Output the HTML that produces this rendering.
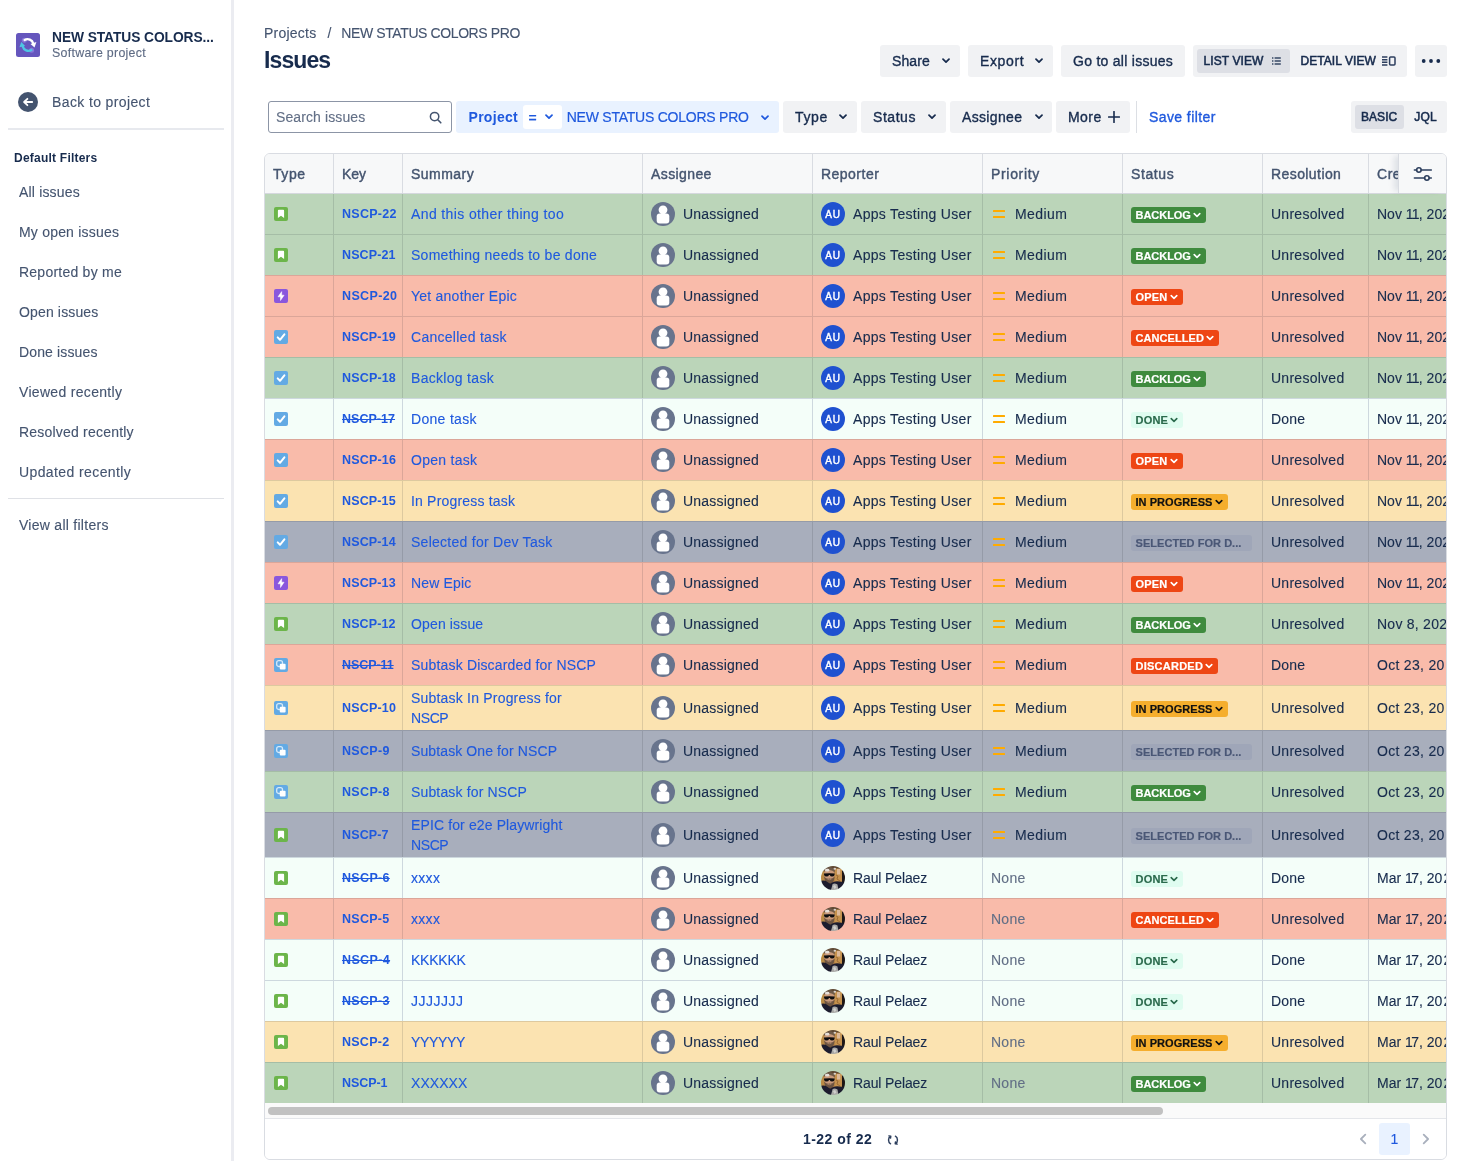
<!DOCTYPE html>
<html lang="en"><head><meta charset="utf-8"><title>Issues - NEW STATUS COLORS PRO</title>
<style>
*{box-sizing:border-box}
html,body{margin:0;padding:0}
body{-webkit-font-smoothing:antialiased;-webkit-text-stroke:.12px currentColor;width:1463px;height:1161px;position:relative;overflow:hidden;background:#fff;font-family:"Liberation Sans",sans-serif;font-size:14px;color:#172b4d}
.abs{position:absolute;white-space:nowrap}
/* sidebar */
.sbr{position:absolute;left:231px;top:0;width:3px;height:1161px;background:#ebecf1}
.pav{position:absolute;left:16px;top:33px;width:24px;height:24px}
.pname{left:52px;top:30px;font-weight:700;font-size:13.8px;line-height:16px;color:#172b4d}
.ptype{left:52px;top:46px;font-size:12.4px;line-height:14px;color:#5e6b84}
.back{position:absolute;left:18px;top:92px;width:20px;height:20px}
.backt{left:52px;top:94px;line-height:16px;color:#44546f}
.sd1{position:absolute;left:8px;top:128px;width:216px;height:2px;background:#e7e9ee}
.dflt{left:14px;top:151px;font-size:12px;font-weight:700;line-height:14px;color:#172b4d}
.it{left:19px;line-height:16px;color:#44546f}
.sd2{position:absolute;left:8px;top:498px;width:216px;height:1px;background:#dfe1e6}
/* header */
.bc{left:264px;top:25px;line-height:16px;color:#44546f}
.ttl{left:264px;top:46px;font-size:23px;line-height:28px;font-weight:700;color:#172b4d}
.btn{position:absolute;height:32px;background:#f1f2f4;border-radius:3px;line-height:32px;white-space:nowrap;color:#172b4d;font-size:14px}
.btn .t{position:absolute;top:0}
.btn .cv{position:absolute;top:13px}
.cv{color:#172b4d}
.grp{position:absolute;height:32px;background:#f1f2f4;border-radius:3px}
.pill{position:absolute;top:4px;height:24px;background:#dddfe5;border-radius:3px}
.gt{position:absolute;top:0;line-height:32px;font-size:12px;font-weight:400;color:#172b4d;white-space:nowrap;-webkit-text-stroke:.55px currentColor}
.search{position:absolute;left:268px;top:101px;width:184px;height:32px;border:1px solid #8c95a6;border-radius:3px;background:#fff}
.search .ph{position:absolute;left:7px;top:0;line-height:30px;color:#626f86}
.proj{position:absolute;left:456px;top:101px;width:323px;height:32px;background:#e9f2ff;border-radius:3px;color:#1f59de}
.proj .eq{position:absolute;left:67px;top:4px;width:39px;height:24px;background:#fff;border-radius:3px}
.vdiv{position:absolute;left:1136px;top:101px;width:1px;height:32px;background:#dcdfe4}
.save{left:1149px;top:109px;line-height:16px;color:#1f59de}
/* table */
.tbl{position:absolute;left:264px;top:153px;width:1183px;height:1007px;border:1px solid #d9dce2;border-radius:6px;overflow:hidden;background:#fff}
.hd{position:absolute;left:0;top:0;width:1181px;height:40px;background:#f7f8f9;border-bottom:1px solid #d5d8de;z-index:2}
.h{position:absolute;top:0;height:39px;line-height:40px;padding-left:8px;border-left:1px solid #d9dce2;font-weight:400;font-size:14px;color:#44546f;white-space:nowrap;overflow:hidden}
.hd .c1{border-left:none}
.c1{left:0;width:68px}
.c2{left:68px;width:69px}
.c3{left:137px;width:240px}
.c4{left:377px;width:170px}
.c5{left:547px;width:170px}
.c6{left:717px;width:140px}
.c7{left:857px;width:140px}
.c8{left:997px;width:106px}
.c9{left:1103px;width:78px}
.cfg{position:absolute;left:1133px;top:0;width:48px;height:39px;background:#f7f8f9;border-left:1px solid #d9dce2;box-shadow:-6px 0 6px -2px rgba(9,30,66,.10)}
.cfg svg{position:absolute;left:14px;top:12px}
.body{position:absolute;left:0;top:39px;width:1181px}
.r{position:relative;height:41px;width:1181px}
.r.tall{height:45px}
.r .c{position:absolute;top:0;height:100%;border-left:1px solid rgba(20,30,40,.13);border-top:1px solid rgba(20,30,40,.13);white-space:nowrap;overflow:hidden}
.r .c1{border-left:none}
.kg{background:#bbd5b9}
.kr{background:#f9bbaa}
.ky{background:#fbe3b1}
.ks{background:#a8aebc}
.kd{background:#f4fef9}
.kd .c{border-color:rgba(49,64,114,.2)}
.ti{position:absolute;left:9px;top:50%;margin-top:-7px}
.key{position:absolute;left:8px;top:50%;margin-top:-8.5px;line-height:16px;font-size:12.5px;font-weight:700;color:#1f59de}
.key.st{text-decoration:line-through}
.sm{position:absolute;left:8px;top:50%;transform:translateY(-50%);margin-top:0;line-height:20px;color:#1f59de}
.av{position:absolute;left:8px;top:50%;margin-top:-12px;width:24px;height:24px}
.au{border-radius:50%;background:#1f51d0;color:#fff;font-size:10px;font-weight:400;text-align:center;line-height:26px;-webkit-text-stroke:.4px #fff}
.nm{position:absolute;left:40px;top:50%;margin-top:-8px;line-height:16px;color:#172b4d}
.pi{position:absolute;left:10px;top:50%;margin-top:-4px;width:12px;height:8px}
.pi i{display:block;width:12px;height:2px;background:#ffab00;margin-bottom:4px;border-radius:.5px}
.pt{position:absolute;left:32px;top:50%;margin-top:-8px;line-height:16px;color:#172b4d}
.none{position:absolute;left:8px;top:50%;margin-top:-8px;line-height:16px;color:#626f86}
.bd{position:absolute;left:8px;top:50%;margin-top:-7px;height:16px;border-radius:3px;font-size:11px;font-weight:700;line-height:16px;white-space:nowrap;overflow:hidden}
.bt{position:absolute;left:4.5px;top:0;-webkit-text-stroke:.2px currentColor}
.bcv{position:absolute;right:5px;top:5px}
.sel{padding-left:4.5px}
.tx{position:absolute;left:8px;top:50%;margin-top:-8px;line-height:16px;color:#172b4d}
.sb{position:absolute;left:0;top:949px;width:1181px;height:16px;background:#fafafa;border-bottom:1px solid #e4e6ea}
.thumb{position:absolute;left:3px;top:4px;width:895px;height:8px;border-radius:4px;background:#c1c1c1}
.ft{position:absolute;left:0;top:965px;width:1181px;height:40px;background:#fff}
.cnt{position:absolute;left:538px;top:12px;line-height:16px;font-weight:700;font-size:14px;color:#172b4d}
.rf{position:absolute;left:621.5px;top:14.5px}
.pl{position:absolute;left:1094px;top:13.7px}
.pr{position:absolute;left:1157px;top:13.7px}
.pg{position:absolute;left:1114px;top:4px;width:31px;height:32px;border-radius:3px;background:#e9f2ff;color:#1f59de;text-align:center;line-height:32px;font-size:14px}

.m{-webkit-text-stroke:.35px currentColor}
.sl{margin:0 10px 0 11px}
.h span{-webkit-text-stroke:.4px currentColor}

.app{position:absolute;left:0;top:0;width:1463px;height:1161px;will-change:transform;background:#fff}
.m2{-webkit-text-stroke:.2px currentColor}
.pname,.dflt,.ttl,.key,.cnt,.b0{-webkit-text-stroke:0}

</style></head>
<body>
<div class="app">
<svg width="0" height="0" style="position:absolute"><defs><clipPath id="rpc"><circle cx="12" cy="12" r="12"/></clipPath><filter id="rpb" x="-10%" y="-10%" width="120%" height="120%"><feGaussianBlur stdDeviation="0.55"/></filter>
<symbol id="rp" viewBox="0 0 24 24"><g clip-path="url(#rpc)"><g filter="url(#rpb)"><rect x="-2" y="-2" width="28" height="28" fill="#a9773f"/>
<rect x="-2" y="-2" width="28" height="7" fill="#5d4632"/>
<rect x="13.5" y="2.5" width="8" height="15" fill="#c4914d"/><rect x="16" y="3" width="3.2" height="5.5" fill="#dcb99a"/><path d="M15 9 l2 1 l-1 3 l3 2" stroke="#9b6a35" stroke-width="1" fill="none"/>
<rect x="21" y="-2" width="5" height="28" fill="#1d1915"/>
<rect x="-2" y="5" width="6" height="10" fill="#b98a45"/>
<ellipse cx="8.3" cy="8.5" rx="5.2" ry="6.2" fill="#c99a7c"/>
<path d="M2.5 6 Q4 1.5 9 1.2 Q13.5 1.5 14 6.5 Q11 3.6 8 4 Q5 4.2 2.5 6Z" fill="#6e5a49"/>
<ellipse cx="6.2" cy="4.2" rx="2.3" ry="1.4" fill="#e6e0da"/><ellipse cx="13.8" cy="2.8" rx="1.3" ry="1" fill="#d8d2cc"/>
<path d="M3 10.5 Q4 17.5 8.5 18 Q13 17.5 13.6 10.8 Q11 13.2 8.4 12.6 Q5.5 13.2 3 10.5Z" fill="#6d5442"/>
<path d="M6.4 13.3 Q8.4 14.2 10.4 13.3" stroke="#b08a72" stroke-width=".7" fill="none"/>
<path d="M-2 15.5 Q3 13.5 6.5 16 Q9 18.5 11 16.5 L14 15.5 Q19 14.8 26 17.5 V26 H-2Z" fill="#1b1c2f"/>
<path d="M9.5 26 L11.5 18.2 Q13.5 16.6 16.5 18.6 L17.8 26Z" fill="#a9a8a6"/><path d="M12 20 l2 -1 l1.5 2.5 l-2 1.5z" fill="#d0cfcd"/>
</g><path d="M3 7.6 Q8.3 6.8 13.7 7.6 L13.5 9 Q13 10.6 11 10.6 Q9.2 10.5 8.8 8.9 L8 8.9 Q7.5 10.5 5.6 10.6 Q3.5 10.5 3.1 9Z" fill="#0d0d0f"/></g></symbol></defs></svg>

<div class="sbr"></div>
<svg class="pav" viewBox="0 0 24 24"><rect width="24" height="24" rx="2.5" fill="#6556bd"/><circle cx="8.3" cy="7.2" r="2.5" fill="#8f7fe0" opacity=".8"/><circle cx="15.6" cy="17.3" r="2.5" fill="#8f7fe0" opacity=".8"/><path d="M8.6 7 A5.9 5.9 0 0 1 17.3 10.6" fill="none" stroke="#fff" stroke-width="2.3" stroke-linecap="round"/><path d="M14.5 10.9 L20.4 9.1 L18.5 14.6 Z" fill="#fff"/><path d="M15.4 17 A5.9 5.9 0 0 1 6.7 13.4" fill="none" stroke="#4fc6e4" stroke-width="2.3" stroke-linecap="round"/><path d="M9.2 12.9 L3.4 14.3 L5.3 8.9 Z" fill="#4fc6e4"/></svg>
<div class="abs pname"><span style="letter-spacing:-0.085px;">NEW STATUS COLORS...</span></div>
<div class="abs ptype"><span style="letter-spacing:0.278px;">Software project</span></div>
<svg class="back" viewBox="0 0 20 20"><circle cx="10" cy="10" r="10" fill="#44546f"/><path d="M14.2 10 H6.4 M9.4 6.8 L6.1 10 L9.4 13.2" fill="none" stroke="#fff" stroke-width="1.8" stroke-linecap="round" stroke-linejoin="round"/></svg>
<div class="abs backt"><span style="letter-spacing:0.378px;">Back to project</span></div>
<div class="sd1"></div>
<div class="abs dflt"><span style="letter-spacing:0.227px;">Default Filters</span></div>
<div class="abs it" style="top:184px"><span style="letter-spacing:0.173px;">All issues</span></div>
<div class="abs it" style="top:224px"><span style="letter-spacing:0.201px;">My open issues</span></div>
<div class="abs it" style="top:264px"><span style="letter-spacing:0.238px;">Reported by me</span></div>
<div class="abs it" style="top:304px"><span style="letter-spacing:0.147px;">Open issues</span></div>
<div class="abs it" style="top:344px"><span style="letter-spacing:0.135px;">Done issues</span></div>
<div class="abs it" style="top:384px"><span style="letter-spacing:0.316px;">Viewed recently</span></div>
<div class="abs it" style="top:424px"><span style="letter-spacing:0.207px;">Resolved recently</span></div>
<div class="abs it" style="top:464px"><span style="letter-spacing:0.397px;">Updated recently</span></div>
<div class="sd2"></div>
<div class="abs it" style="top:517px"><span style="letter-spacing:0.271px;">View all filters</span></div>

<div class="abs bc"><span style="letter-spacing:0.232px;">Projects</span><span class="sl">/</span><span style="letter-spacing:-0.398px;">NEW STATUS COLORS PRO</span></div>
<div class="abs ttl"><span style="letter-spacing:-0.9px;">Issues</span></div>

<div class="btn" style="left:880px;top:45px;width:80px"><span class="t m" style="letter-spacing:0.11px;left:12px">Share</span><svg class="cv" style="left:62px" viewBox="0 0 8 6" width="8" height="6"><path d="M1 1.2 L4 4.2 L7 1.2" fill="none" stroke="currentColor" stroke-width="1.7" stroke-linecap="round" stroke-linejoin="round"/></svg></div>
<div class="btn" style="left:968px;top:45px;width:85px"><span class="t m" style="letter-spacing:0.626px;left:12px">Export</span><svg class="cv" style="left:67px" viewBox="0 0 8 6" width="8" height="6"><path d="M1 1.2 L4 4.2 L7 1.2" fill="none" stroke="currentColor" stroke-width="1.7" stroke-linecap="round" stroke-linejoin="round"/></svg></div>
<div class="btn" style="left:1061px;top:45px;width:124px"><span class="t m" style="letter-spacing:0.272px;left:12px">Go to all issues</span></div>
<div class="grp" style="left:1193px;top:45px;width:214px"><div class="pill" style="left:4px;width:93px"></div><span class="gt" style="letter-spacing:0.095px;left:10.5px">LIST VIEW</span><svg style="position:absolute;left:79px;top:12px" viewBox="0 0 9 8" width="9" height="8"><g fill="#2c3e5d"><rect x="0" y="0.3" width="1.4" height="1.4"/><rect x="2.6" y="0.3" width="6.2" height="1.4"/><rect x="0" y="3.3" width="1.4" height="1.4"/><rect x="2.6" y="3.3" width="6.2" height="1.4"/><rect x="0" y="6.3" width="1.4" height="1.4"/><rect x="2.6" y="6.3" width="6.2" height="1.4"/></g></svg><span class="gt" style="letter-spacing:0.081px;left:107.4px">DETAIL VIEW</span><svg style="position:absolute;left:189px;top:11px" viewBox="0 0 14 10" width="14" height="10"><g fill="none" stroke="#2c3e5d" stroke-width="1.5"><path d="M0 1 H5.4 M0 3.7 H5.4 M0 6.3 H5.4 M0 9 H5.4"/><rect x="7.6" y="0.9" width="5.4" height="8.2" rx="1"/></g></svg></div>
<div class="btn" style="left:1415px;top:45px;width:32px"><svg style="position:absolute;left:6px;top:14px" viewBox="0 0 20 4" width="20" height="4"><circle cx="2.7" cy="2" r="1.9" fill="#172b4d"/><circle cx="10" cy="2" r="1.9" fill="#172b4d"/><circle cx="17.3" cy="2" r="1.9" fill="#172b4d"/></svg></div>

<div class="search"><span class="ph" style="letter-spacing:0.105px;">Search issues</span><svg style="position:absolute;left:160px;top:9px" viewBox="0 0 13 13" width="13" height="13"><circle cx="5.6" cy="5.6" r="4.2" fill="none" stroke="#44546f" stroke-width="1.5"/><path d="M8.8 8.8 L11.8 11.8" stroke="#44546f" stroke-width="1.6" stroke-linecap="round"/></svg></div>
<div class="proj"><span class="abs b0" style="letter-spacing:0.289px;left:12.5px;top:0;line-height:32px;font-weight:700">Project</span><div class="eq"><span class="abs m" style="left:5.5px;top:1px;line-height:24px;font-size:14px">=</span><svg class="abs" style="left:22px;top:9px;color:#1f59de" viewBox="0 0 8 6" width="8" height="6"><path d="M1 1.2 L4 4.2 L7 1.2" fill="none" stroke="currentColor" stroke-width="1.7" stroke-linecap="round" stroke-linejoin="round"/></svg></div><span class="abs m2" style="letter-spacing:-0.233px;left:110.7px;top:0;line-height:32px">NEW STATUS COLORS PRO</span><svg class="abs" style="left:305px;top:13.5px;color:#1f59de" viewBox="0 0 8 6" width="8" height="6"><path d="M1 1.2 L4 4.2 L7 1.2" fill="none" stroke="currentColor" stroke-width="1.7" stroke-linecap="round" stroke-linejoin="round"/></svg></div>
<div class="btn" style="left:783px;top:101px;width:74px"><span class="t m" style="letter-spacing:0.647px;left:12px">Type</span><svg class="cv" style="left:56px" viewBox="0 0 8 6" width="8" height="6"><path d="M1 1.2 L4 4.2 L7 1.2" fill="none" stroke="currentColor" stroke-width="1.7" stroke-linecap="round" stroke-linejoin="round"/></svg></div>
<div class="btn" style="left:861px;top:101px;width:85px"><span class="t m" style="letter-spacing:0.539px;left:12px">Status</span><svg class="cv" style="left:67px" viewBox="0 0 8 6" width="8" height="6"><path d="M1 1.2 L4 4.2 L7 1.2" fill="none" stroke="currentColor" stroke-width="1.7" stroke-linecap="round" stroke-linejoin="round"/></svg></div>
<div class="btn" style="left:950px;top:101px;width:102px"><span class="t m" style="letter-spacing:0.344px;left:12px">Assignee</span><svg class="cv" style="left:84.5px" viewBox="0 0 8 6" width="8" height="6"><path d="M1 1.2 L4 4.2 L7 1.2" fill="none" stroke="currentColor" stroke-width="1.7" stroke-linecap="round" stroke-linejoin="round"/></svg></div>
<div class="btn" style="left:1056px;top:101px;width:74px"><span class="t m" style="letter-spacing:0.431px;left:12px">More</span><svg style="position:absolute;left:52px;top:10px" viewBox="0 0 12 12" width="12" height="12"><path d="M6 0.6 V11.4 M0.6 6 H11.4" stroke="#172b4d" stroke-width="1.6" stroke-linecap="round"/></svg></div>
<div class="vdiv"></div>
<div class="abs save"><span class="m" style="letter-spacing:0.415px;">Save filter</span></div>
<div class="grp" style="left:1351px;top:101px;width:96px"><div class="pill" style="left:4px;width:49px"></div><span class="gt" style="letter-spacing:0.046px;left:10px">BASIC</span><span class="gt" style="letter-spacing:0.242px;left:63.2px">JQL</span></div>

<div class="tbl">
<div class="hd">
<div class="h c1"><span style="letter-spacing:0.58px;">Type</span></div><div class="h c2"><span style="letter-spacing:-0.013px;">Key</span></div><div class="h c3"><span style="letter-spacing:0.466px;">Summary</span></div><div class="h c4"><span style="letter-spacing:0.401px;">Assignee</span></div><div class="h c5"><span style="letter-spacing:0.476px;">Reporter</span></div><div class="h c6"><span style="letter-spacing:0.677px;">Priority</span></div><div class="h c7"><span style="letter-spacing:0.599px;">Status</span></div><div class="h c8"><span style="letter-spacing:0.416px;">Resolution</span></div><div class="h c9"><span style="letter-spacing:0.515px;">Created</span></div>
<div class="cfg"><svg viewBox="0 0 20 16" width="20" height="16"><g fill="none" stroke="#2c3e5d" stroke-width="1.6" stroke-linecap="round"><path d="M1.4 4 H3.5 M8.3 4 H18.3"/><circle cx="5.9" cy="4" r="2.25"/><path d="M1.4 12 H11.5 M16.3 12 H18.3"/><circle cx="13.9" cy="12" r="2.25"/></g></svg></div>
</div>
<div class="body">
<div class="r kg"><div class="c c1"><svg class="ti" viewBox="0 0 14 14" width="14" height="14"><rect width="14" height="14" rx="2" fill="#6cb54a"/><path d="M3.9 3.7 a0.9 0.9 0 0 1 .9 -.9 h4.4 a0.9 0.9 0 0 1 .9 .9 V11 L7 8.7 L3.9 11 Z" fill="#fff"/></svg></div><div class="c c2"><span class="key" style="letter-spacing:0.267px;">NSCP-22</span></div><div class="c c3"><span class="sm"><span style="letter-spacing:0.378px;">And this other thing too</span></span></div><div class="c c4"><svg class="av" viewBox="0 0 24 24" width="24" height="24"><circle cx="12" cy="12" r="12" fill="#68748d"/><circle cx="12" cy="7.8" r="4.4" fill="#fff"/><rect x="5.7" y="11.6" width="12.6" height="10" rx="3" fill="#fff"/></svg><span class="nm" style="letter-spacing:0.218px;">Unassigned</span></div><div class="c c5"><span class="av au"><span style="letter-spacing:0.9px;">AU</span></span><span class="nm" style="letter-spacing:0.309px;">Apps Testing User</span></div><div class="c c6"><span class="pi"><i></i><i></i></span><span class="pt" style="letter-spacing:0.421px;">Medium</span></div><div class="c c7"><span class="bd" style="background:#3f8b3e;color:#fff;width:75px"><span class="bt" style="letter-spacing:-0.035px;">BACKLOG</span><svg class="bcv" viewBox="0 0 8 6" width="8" height="6"><path d="M1.2 1.6 L4 4.3 L6.8 1.6" fill="none" stroke="currentColor" stroke-width="1.6" stroke-linecap="round" stroke-linejoin="round"/></svg></span></div><div class="c c8"><span class="tx" style="letter-spacing:0.264px;">Unresolved</span></div><div class="c c9"><span class="tx">Nov <span style="letter-spacing:-.75px">11</span>, 2024</span></div></div>
<div class="r kg"><div class="c c1"><svg class="ti" viewBox="0 0 14 14" width="14" height="14"><rect width="14" height="14" rx="2" fill="#6cb54a"/><path d="M3.9 3.7 a0.9 0.9 0 0 1 .9 -.9 h4.4 a0.9 0.9 0 0 1 .9 .9 V11 L7 8.7 L3.9 11 Z" fill="#fff"/></svg></div><div class="c c2"><span class="key" style="letter-spacing:0.117px;">NSCP-21</span></div><div class="c c3"><span class="sm"><span style="letter-spacing:0.271px;">Something needs to be done</span></span></div><div class="c c4"><svg class="av" viewBox="0 0 24 24" width="24" height="24"><circle cx="12" cy="12" r="12" fill="#68748d"/><circle cx="12" cy="7.8" r="4.4" fill="#fff"/><rect x="5.7" y="11.6" width="12.6" height="10" rx="3" fill="#fff"/></svg><span class="nm" style="letter-spacing:0.218px;">Unassigned</span></div><div class="c c5"><span class="av au"><span style="letter-spacing:0.9px;">AU</span></span><span class="nm" style="letter-spacing:0.309px;">Apps Testing User</span></div><div class="c c6"><span class="pi"><i></i><i></i></span><span class="pt" style="letter-spacing:0.421px;">Medium</span></div><div class="c c7"><span class="bd" style="background:#3f8b3e;color:#fff;width:75px"><span class="bt" style="letter-spacing:-0.035px;">BACKLOG</span><svg class="bcv" viewBox="0 0 8 6" width="8" height="6"><path d="M1.2 1.6 L4 4.3 L6.8 1.6" fill="none" stroke="currentColor" stroke-width="1.6" stroke-linecap="round" stroke-linejoin="round"/></svg></span></div><div class="c c8"><span class="tx" style="letter-spacing:0.264px;">Unresolved</span></div><div class="c c9"><span class="tx">Nov <span style="letter-spacing:-.75px">11</span>, 2024</span></div></div>
<div class="r kr"><div class="c c1"><svg class="ti" viewBox="0 0 14 14" width="14" height="14"><rect width="14" height="14" rx="2" fill="#8a57dd"/><path d="M7.7 2.6 V6.2 H10.1 L6.5 11.5 V7.8 H4 Z" fill="#fff" stroke="#fff" stroke-width=".5" stroke-linejoin="round"/></svg></div><div class="c c2"><span class="key" style="letter-spacing:0.351px;">NSCP-20</span></div><div class="c c3"><span class="sm"><span style="letter-spacing:0.238px;">Yet another Epic</span></span></div><div class="c c4"><svg class="av" viewBox="0 0 24 24" width="24" height="24"><circle cx="12" cy="12" r="12" fill="#68748d"/><circle cx="12" cy="7.8" r="4.4" fill="#fff"/><rect x="5.7" y="11.6" width="12.6" height="10" rx="3" fill="#fff"/></svg><span class="nm" style="letter-spacing:0.218px;">Unassigned</span></div><div class="c c5"><span class="av au"><span style="letter-spacing:0.9px;">AU</span></span><span class="nm" style="letter-spacing:0.309px;">Apps Testing User</span></div><div class="c c6"><span class="pi"><i></i><i></i></span><span class="pt" style="letter-spacing:0.421px;">Medium</span></div><div class="c c7"><span class="bd" style="background:#ee4614;color:#fff;width:52px"><span class="bt" style="letter-spacing:0.171px;">OPEN</span><svg class="bcv" viewBox="0 0 8 6" width="8" height="6"><path d="M1.2 1.6 L4 4.3 L6.8 1.6" fill="none" stroke="currentColor" stroke-width="1.6" stroke-linecap="round" stroke-linejoin="round"/></svg></span></div><div class="c c8"><span class="tx" style="letter-spacing:0.264px;">Unresolved</span></div><div class="c c9"><span class="tx">Nov <span style="letter-spacing:-.75px">11</span>, 2024</span></div></div>
<div class="r kr"><div class="c c1"><svg class="ti" viewBox="0 0 14 14" width="14" height="14"><rect width="14" height="14" rx="2" fill="#63aae4"/><path d="M3.7 7.4 L6 9.8 L10.4 4.4" fill="none" stroke="#fff" stroke-width="2" stroke-linecap="round" stroke-linejoin="round"/></svg></div><div class="c c2"><span class="key" style="letter-spacing:0.151px;">NSCP-19</span></div><div class="c c3"><span class="sm"><span style="letter-spacing:0.275px;">Cancelled task</span></span></div><div class="c c4"><svg class="av" viewBox="0 0 24 24" width="24" height="24"><circle cx="12" cy="12" r="12" fill="#68748d"/><circle cx="12" cy="7.8" r="4.4" fill="#fff"/><rect x="5.7" y="11.6" width="12.6" height="10" rx="3" fill="#fff"/></svg><span class="nm" style="letter-spacing:0.218px;">Unassigned</span></div><div class="c c5"><span class="av au"><span style="letter-spacing:0.9px;">AU</span></span><span class="nm" style="letter-spacing:0.309px;">Apps Testing User</span></div><div class="c c6"><span class="pi"><i></i><i></i></span><span class="pt" style="letter-spacing:0.421px;">Medium</span></div><div class="c c7"><span class="bd" style="background:#ee4614;color:#fff;width:88px"><span class="bt" style="letter-spacing:0.07px;">CANCELLED</span><svg class="bcv" viewBox="0 0 8 6" width="8" height="6"><path d="M1.2 1.6 L4 4.3 L6.8 1.6" fill="none" stroke="currentColor" stroke-width="1.6" stroke-linecap="round" stroke-linejoin="round"/></svg></span></div><div class="c c8"><span class="tx" style="letter-spacing:0.264px;">Unresolved</span></div><div class="c c9"><span class="tx">Nov <span style="letter-spacing:-.75px">11</span>, 2024</span></div></div>
<div class="r kg"><div class="c c1"><svg class="ti" viewBox="0 0 14 14" width="14" height="14"><rect width="14" height="14" rx="2" fill="#63aae4"/><path d="M3.7 7.4 L6 9.8 L10.4 4.4" fill="none" stroke="#fff" stroke-width="2" stroke-linecap="round" stroke-linejoin="round"/></svg></div><div class="c c2"><span class="key" style="letter-spacing:0.167px;">NSCP-18</span></div><div class="c c3"><span class="sm"><span style="letter-spacing:0.302px;">Backlog task</span></span></div><div class="c c4"><svg class="av" viewBox="0 0 24 24" width="24" height="24"><circle cx="12" cy="12" r="12" fill="#68748d"/><circle cx="12" cy="7.8" r="4.4" fill="#fff"/><rect x="5.7" y="11.6" width="12.6" height="10" rx="3" fill="#fff"/></svg><span class="nm" style="letter-spacing:0.218px;">Unassigned</span></div><div class="c c5"><span class="av au"><span style="letter-spacing:0.9px;">AU</span></span><span class="nm" style="letter-spacing:0.309px;">Apps Testing User</span></div><div class="c c6"><span class="pi"><i></i><i></i></span><span class="pt" style="letter-spacing:0.421px;">Medium</span></div><div class="c c7"><span class="bd" style="background:#3f8b3e;color:#fff;width:75px"><span class="bt" style="letter-spacing:-0.035px;">BACKLOG</span><svg class="bcv" viewBox="0 0 8 6" width="8" height="6"><path d="M1.2 1.6 L4 4.3 L6.8 1.6" fill="none" stroke="currentColor" stroke-width="1.6" stroke-linecap="round" stroke-linejoin="round"/></svg></span></div><div class="c c8"><span class="tx" style="letter-spacing:0.264px;">Unresolved</span></div><div class="c c9"><span class="tx">Nov <span style="letter-spacing:-.75px">11</span>, 2024</span></div></div>
<div class="r kd"><div class="c c1"><svg class="ti" viewBox="0 0 14 14" width="14" height="14"><rect width="14" height="14" rx="2" fill="#63aae4"/><path d="M3.7 7.4 L6 9.8 L10.4 4.4" fill="none" stroke="#fff" stroke-width="2" stroke-linecap="round" stroke-linejoin="round"/></svg></div><div class="c c2"><span class="key st" style="letter-spacing:0.034px;">NSCP-17</span></div><div class="c c3"><span class="sm"><span style="letter-spacing:0.307px;">Done task</span></span></div><div class="c c4"><svg class="av" viewBox="0 0 24 24" width="24" height="24"><circle cx="12" cy="12" r="12" fill="#68748d"/><circle cx="12" cy="7.8" r="4.4" fill="#fff"/><rect x="5.7" y="11.6" width="12.6" height="10" rx="3" fill="#fff"/></svg><span class="nm" style="letter-spacing:0.218px;">Unassigned</span></div><div class="c c5"><span class="av au"><span style="letter-spacing:0.9px;">AU</span></span><span class="nm" style="letter-spacing:0.309px;">Apps Testing User</span></div><div class="c c6"><span class="pi"><i></i><i></i></span><span class="pt" style="letter-spacing:0.421px;">Medium</span></div><div class="c c7"><span class="bd" style="background:#dffcf0;color:#2a6a4c;width:52px"><span class="bt" style="letter-spacing:0.206px;">DONE</span><svg class="bcv" viewBox="0 0 8 6" width="8" height="6"><path d="M1.2 1.6 L4 4.3 L6.8 1.6" fill="none" stroke="currentColor" stroke-width="1.6" stroke-linecap="round" stroke-linejoin="round"/></svg></span></div><div class="c c8"><span class="tx" style="letter-spacing:0.177px;">Done</span></div><div class="c c9"><span class="tx">Nov <span style="letter-spacing:-.75px">11</span>, 2024</span></div></div>
<div class="r kr"><div class="c c1"><svg class="ti" viewBox="0 0 14 14" width="14" height="14"><rect width="14" height="14" rx="2" fill="#63aae4"/><path d="M3.7 7.4 L6 9.8 L10.4 4.4" fill="none" stroke="#fff" stroke-width="2" stroke-linecap="round" stroke-linejoin="round"/></svg></div><div class="c c2"><span class="key" style="letter-spacing:0.184px;">NSCP-16</span></div><div class="c c3"><span class="sm"><span style="letter-spacing:0.284px;">Open task</span></span></div><div class="c c4"><svg class="av" viewBox="0 0 24 24" width="24" height="24"><circle cx="12" cy="12" r="12" fill="#68748d"/><circle cx="12" cy="7.8" r="4.4" fill="#fff"/><rect x="5.7" y="11.6" width="12.6" height="10" rx="3" fill="#fff"/></svg><span class="nm" style="letter-spacing:0.218px;">Unassigned</span></div><div class="c c5"><span class="av au"><span style="letter-spacing:0.9px;">AU</span></span><span class="nm" style="letter-spacing:0.309px;">Apps Testing User</span></div><div class="c c6"><span class="pi"><i></i><i></i></span><span class="pt" style="letter-spacing:0.421px;">Medium</span></div><div class="c c7"><span class="bd" style="background:#ee4614;color:#fff;width:52px"><span class="bt" style="letter-spacing:0.171px;">OPEN</span><svg class="bcv" viewBox="0 0 8 6" width="8" height="6"><path d="M1.2 1.6 L4 4.3 L6.8 1.6" fill="none" stroke="currentColor" stroke-width="1.6" stroke-linecap="round" stroke-linejoin="round"/></svg></span></div><div class="c c8"><span class="tx" style="letter-spacing:0.264px;">Unresolved</span></div><div class="c c9"><span class="tx">Nov <span style="letter-spacing:-.75px">11</span>, 2024</span></div></div>
<div class="r ky"><div class="c c1"><svg class="ti" viewBox="0 0 14 14" width="14" height="14"><rect width="14" height="14" rx="2" fill="#63aae4"/><path d="M3.7 7.4 L6 9.8 L10.4 4.4" fill="none" stroke="#fff" stroke-width="2" stroke-linecap="round" stroke-linejoin="round"/></svg></div><div class="c c2"><span class="key" style="letter-spacing:0.134px;">NSCP-15</span></div><div class="c c3"><span class="sm"><span style="letter-spacing:0.183px;">In Progress task</span></span></div><div class="c c4"><svg class="av" viewBox="0 0 24 24" width="24" height="24"><circle cx="12" cy="12" r="12" fill="#68748d"/><circle cx="12" cy="7.8" r="4.4" fill="#fff"/><rect x="5.7" y="11.6" width="12.6" height="10" rx="3" fill="#fff"/></svg><span class="nm" style="letter-spacing:0.218px;">Unassigned</span></div><div class="c c5"><span class="av au"><span style="letter-spacing:0.9px;">AU</span></span><span class="nm" style="letter-spacing:0.309px;">Apps Testing User</span></div><div class="c c6"><span class="pi"><i></i><i></i></span><span class="pt" style="letter-spacing:0.421px;">Medium</span></div><div class="c c7"><span class="bd" style="background:#f5ae2d;color:#111;width:97px"><span class="bt" style="letter-spacing:0.049px;">IN PROGRESS</span><svg class="bcv" viewBox="0 0 8 6" width="8" height="6"><path d="M1.2 1.6 L4 4.3 L6.8 1.6" fill="none" stroke="currentColor" stroke-width="1.6" stroke-linecap="round" stroke-linejoin="round"/></svg></span></div><div class="c c8"><span class="tx" style="letter-spacing:0.264px;">Unresolved</span></div><div class="c c9"><span class="tx">Nov <span style="letter-spacing:-.75px">11</span>, 2024</span></div></div>
<div class="r ks"><div class="c c1"><svg class="ti" viewBox="0 0 14 14" width="14" height="14"><rect width="14" height="14" rx="2" fill="#63aae4"/><path d="M3.7 7.4 L6 9.8 L10.4 4.4" fill="none" stroke="#fff" stroke-width="2" stroke-linecap="round" stroke-linejoin="round"/></svg></div><div class="c c2"><span class="key" style="letter-spacing:0.134px;">NSCP-14</span></div><div class="c c3"><span class="sm"><span style="letter-spacing:0.264px;">Selected for Dev Task</span></span></div><div class="c c4"><svg class="av" viewBox="0 0 24 24" width="24" height="24"><circle cx="12" cy="12" r="12" fill="#68748d"/><circle cx="12" cy="7.8" r="4.4" fill="#fff"/><rect x="5.7" y="11.6" width="12.6" height="10" rx="3" fill="#fff"/></svg><span class="nm" style="letter-spacing:0.218px;">Unassigned</span></div><div class="c c5"><span class="av au"><span style="letter-spacing:0.9px;">AU</span></span><span class="nm" style="letter-spacing:0.309px;">Apps Testing User</span></div><div class="c c6"><span class="pi"><i></i><i></i></span><span class="pt" style="letter-spacing:0.421px;">Medium</span></div><div class="c c7"><span class="bd sel" style="background:#9fa6b8;color:#4a5776;width:121px"><span class="bt" style="letter-spacing:0.048px;">SELECTED FOR D...</span></span></div><div class="c c8"><span class="tx" style="letter-spacing:0.264px;">Unresolved</span></div><div class="c c9"><span class="tx">Nov <span style="letter-spacing:-.75px">11</span>, 2024</span></div></div>
<div class="r kr"><div class="c c1"><svg class="ti" viewBox="0 0 14 14" width="14" height="14"><rect width="14" height="14" rx="2" fill="#8a57dd"/><path d="M7.7 2.6 V6.2 H10.1 L6.5 11.5 V7.8 H4 Z" fill="#fff" stroke="#fff" stroke-width=".5" stroke-linejoin="round"/></svg></div><div class="c c2"><span class="key" style="letter-spacing:0.134px;">NSCP-13</span></div><div class="c c3"><span class="sm"><span style="letter-spacing:0.166px;">New Epic</span></span></div><div class="c c4"><svg class="av" viewBox="0 0 24 24" width="24" height="24"><circle cx="12" cy="12" r="12" fill="#68748d"/><circle cx="12" cy="7.8" r="4.4" fill="#fff"/><rect x="5.7" y="11.6" width="12.6" height="10" rx="3" fill="#fff"/></svg><span class="nm" style="letter-spacing:0.218px;">Unassigned</span></div><div class="c c5"><span class="av au"><span style="letter-spacing:0.9px;">AU</span></span><span class="nm" style="letter-spacing:0.309px;">Apps Testing User</span></div><div class="c c6"><span class="pi"><i></i><i></i></span><span class="pt" style="letter-spacing:0.421px;">Medium</span></div><div class="c c7"><span class="bd" style="background:#ee4614;color:#fff;width:52px"><span class="bt" style="letter-spacing:0.171px;">OPEN</span><svg class="bcv" viewBox="0 0 8 6" width="8" height="6"><path d="M1.2 1.6 L4 4.3 L6.8 1.6" fill="none" stroke="currentColor" stroke-width="1.6" stroke-linecap="round" stroke-linejoin="round"/></svg></span></div><div class="c c8"><span class="tx" style="letter-spacing:0.264px;">Unresolved</span></div><div class="c c9"><span class="tx">Nov <span style="letter-spacing:-.75px">11</span>, 2024</span></div></div>
<div class="r kg"><div class="c c1"><svg class="ti" viewBox="0 0 14 14" width="14" height="14"><rect width="14" height="14" rx="2" fill="#6cb54a"/><path d="M3.9 3.7 a0.9 0.9 0 0 1 .9 -.9 h4.4 a0.9 0.9 0 0 1 .9 .9 V11 L7 8.7 L3.9 11 Z" fill="#fff"/></svg></div><div class="c c2"><span class="key" style="letter-spacing:0.101px;">NSCP-12</span></div><div class="c c3"><span class="sm"><span style="letter-spacing:0.141px;">Open issue</span></span></div><div class="c c4"><svg class="av" viewBox="0 0 24 24" width="24" height="24"><circle cx="12" cy="12" r="12" fill="#68748d"/><circle cx="12" cy="7.8" r="4.4" fill="#fff"/><rect x="5.7" y="11.6" width="12.6" height="10" rx="3" fill="#fff"/></svg><span class="nm" style="letter-spacing:0.218px;">Unassigned</span></div><div class="c c5"><span class="av au"><span style="letter-spacing:0.9px;">AU</span></span><span class="nm" style="letter-spacing:0.309px;">Apps Testing User</span></div><div class="c c6"><span class="pi"><i></i><i></i></span><span class="pt" style="letter-spacing:0.421px;">Medium</span></div><div class="c c7"><span class="bd" style="background:#3f8b3e;color:#fff;width:75px"><span class="bt" style="letter-spacing:-0.035px;">BACKLOG</span><svg class="bcv" viewBox="0 0 8 6" width="8" height="6"><path d="M1.2 1.6 L4 4.3 L6.8 1.6" fill="none" stroke="currentColor" stroke-width="1.6" stroke-linecap="round" stroke-linejoin="round"/></svg></span></div><div class="c c8"><span class="tx" style="letter-spacing:0.264px;">Unresolved</span></div><div class="c c9"><span class="tx" style="letter-spacing:.25px">Nov 8, 2024</span></div></div>
<div class="r kr"><div class="c c1"><svg class="ti" viewBox="0 0 14 14" width="14" height="14"><rect width="14" height="14" rx="2" fill="#63aae4"/><rect x="2.7" y="2.7" width="5.8" height="5.8" rx="2" fill="none" stroke="#d6eafa" stroke-width="1.3"/><rect x="5.8" y="5.8" width="5.8" height="5.8" rx="1" fill="#fff"/></svg></div><div class="c c2"><span class="key st" style="letter-spacing:-0.068px;">NSCP-11</span></div><div class="c c3"><span class="sm"><span style="letter-spacing:0.175px;">Subtask Discarded for NSCP</span></span></div><div class="c c4"><svg class="av" viewBox="0 0 24 24" width="24" height="24"><circle cx="12" cy="12" r="12" fill="#68748d"/><circle cx="12" cy="7.8" r="4.4" fill="#fff"/><rect x="5.7" y="11.6" width="12.6" height="10" rx="3" fill="#fff"/></svg><span class="nm" style="letter-spacing:0.218px;">Unassigned</span></div><div class="c c5"><span class="av au"><span style="letter-spacing:0.9px;">AU</span></span><span class="nm" style="letter-spacing:0.309px;">Apps Testing User</span></div><div class="c c6"><span class="pi"><i></i><i></i></span><span class="pt" style="letter-spacing:0.421px;">Medium</span></div><div class="c c7"><span class="bd" style="background:#ee4614;color:#fff;width:87px"><span class="bt" style="letter-spacing:0.249px;">DISCARDED</span><svg class="bcv" viewBox="0 0 8 6" width="8" height="6"><path d="M1.2 1.6 L4 4.3 L6.8 1.6" fill="none" stroke="currentColor" stroke-width="1.6" stroke-linecap="round" stroke-linejoin="round"/></svg></span></div><div class="c c8"><span class="tx" style="letter-spacing:0.177px;">Done</span></div><div class="c c9"><span class="tx" style="letter-spacing:.3px">Oct 23, 20<span style="margin-left:1.5px">24</span></span></div></div>
<div class="r ky tall"><div class="c c1"><svg class="ti" viewBox="0 0 14 14" width="14" height="14"><rect width="14" height="14" rx="2" fill="#63aae4"/><rect x="2.7" y="2.7" width="5.8" height="5.8" rx="2" fill="none" stroke="#d6eafa" stroke-width="1.3"/><rect x="5.8" y="5.8" width="5.8" height="5.8" rx="1" fill="#fff"/></svg></div><div class="c c2"><span class="key" style="letter-spacing:0.184px;">NSCP-10</span></div><div class="c c3"><span class="sm"><span style="letter-spacing:0.2px;">Subtask In Progress for</span><br><span style="letter-spacing:-0.402px;">NSCP</span></span></div><div class="c c4"><svg class="av" viewBox="0 0 24 24" width="24" height="24"><circle cx="12" cy="12" r="12" fill="#68748d"/><circle cx="12" cy="7.8" r="4.4" fill="#fff"/><rect x="5.7" y="11.6" width="12.6" height="10" rx="3" fill="#fff"/></svg><span class="nm" style="letter-spacing:0.218px;">Unassigned</span></div><div class="c c5"><span class="av au"><span style="letter-spacing:0.9px;">AU</span></span><span class="nm" style="letter-spacing:0.309px;">Apps Testing User</span></div><div class="c c6"><span class="pi"><i></i><i></i></span><span class="pt" style="letter-spacing:0.421px;">Medium</span></div><div class="c c7"><span class="bd" style="background:#f5ae2d;color:#111;width:97px"><span class="bt" style="letter-spacing:0.049px;">IN PROGRESS</span><svg class="bcv" viewBox="0 0 8 6" width="8" height="6"><path d="M1.2 1.6 L4 4.3 L6.8 1.6" fill="none" stroke="currentColor" stroke-width="1.6" stroke-linecap="round" stroke-linejoin="round"/></svg></span></div><div class="c c8"><span class="tx" style="letter-spacing:0.264px;">Unresolved</span></div><div class="c c9"><span class="tx" style="letter-spacing:.3px">Oct 23, 20<span style="margin-left:1.5px">24</span></span></div></div>
<div class="r ks"><div class="c c1"><svg class="ti" viewBox="0 0 14 14" width="14" height="14"><rect width="14" height="14" rx="2" fill="#63aae4"/><rect x="2.7" y="2.7" width="5.8" height="5.8" rx="2" fill="none" stroke="#d6eafa" stroke-width="1.3"/><rect x="5.8" y="5.8" width="5.8" height="5.8" rx="1" fill="#fff"/></svg></div><div class="c c2"><span class="key" style="letter-spacing:0.311px;">NSCP-9</span></div><div class="c c3"><span class="sm"><span style="letter-spacing:0.108px;">Subtask One for NSCP</span></span></div><div class="c c4"><svg class="av" viewBox="0 0 24 24" width="24" height="24"><circle cx="12" cy="12" r="12" fill="#68748d"/><circle cx="12" cy="7.8" r="4.4" fill="#fff"/><rect x="5.7" y="11.6" width="12.6" height="10" rx="3" fill="#fff"/></svg><span class="nm" style="letter-spacing:0.218px;">Unassigned</span></div><div class="c c5"><span class="av au"><span style="letter-spacing:0.9px;">AU</span></span><span class="nm" style="letter-spacing:0.309px;">Apps Testing User</span></div><div class="c c6"><span class="pi"><i></i><i></i></span><span class="pt" style="letter-spacing:0.421px;">Medium</span></div><div class="c c7"><span class="bd sel" style="background:#9fa6b8;color:#4a5776;width:121px"><span class="bt" style="letter-spacing:0.048px;">SELECTED FOR D...</span></span></div><div class="c c8"><span class="tx" style="letter-spacing:0.264px;">Unresolved</span></div><div class="c c9"><span class="tx" style="letter-spacing:.3px">Oct 23, 20<span style="margin-left:1.5px">24</span></span></div></div>
<div class="r kg"><div class="c c1"><svg class="ti" viewBox="0 0 14 14" width="14" height="14"><rect width="14" height="14" rx="2" fill="#63aae4"/><rect x="2.7" y="2.7" width="5.8" height="5.8" rx="2" fill="none" stroke="#d6eafa" stroke-width="1.3"/><rect x="5.8" y="5.8" width="5.8" height="5.8" rx="1" fill="#fff"/></svg></div><div class="c c2"><span class="key" style="letter-spacing:0.331px;">NSCP-8</span></div><div class="c c3"><span class="sm"><span style="letter-spacing:0.153px;">Subtask for NSCP</span></span></div><div class="c c4"><svg class="av" viewBox="0 0 24 24" width="24" height="24"><circle cx="12" cy="12" r="12" fill="#68748d"/><circle cx="12" cy="7.8" r="4.4" fill="#fff"/><rect x="5.7" y="11.6" width="12.6" height="10" rx="3" fill="#fff"/></svg><span class="nm" style="letter-spacing:0.218px;">Unassigned</span></div><div class="c c5"><span class="av au"><span style="letter-spacing:0.9px;">AU</span></span><span class="nm" style="letter-spacing:0.309px;">Apps Testing User</span></div><div class="c c6"><span class="pi"><i></i><i></i></span><span class="pt" style="letter-spacing:0.421px;">Medium</span></div><div class="c c7"><span class="bd" style="background:#3f8b3e;color:#fff;width:75px"><span class="bt" style="letter-spacing:-0.035px;">BACKLOG</span><svg class="bcv" viewBox="0 0 8 6" width="8" height="6"><path d="M1.2 1.6 L4 4.3 L6.8 1.6" fill="none" stroke="currentColor" stroke-width="1.6" stroke-linecap="round" stroke-linejoin="round"/></svg></span></div><div class="c c8"><span class="tx" style="letter-spacing:0.264px;">Unresolved</span></div><div class="c c9"><span class="tx" style="letter-spacing:.3px">Oct 23, 20<span style="margin-left:1.5px">24</span></span></div></div>
<div class="r ks tall"><div class="c c1"><svg class="ti" viewBox="0 0 14 14" width="14" height="14"><rect width="14" height="14" rx="2" fill="#6cb54a"/><path d="M3.9 3.7 a0.9 0.9 0 0 1 .9 -.9 h4.4 a0.9 0.9 0 0 1 .9 .9 V11 L7 8.7 L3.9 11 Z" fill="#fff"/></svg></div><div class="c c2"><span class="key" style="letter-spacing:0.131px;">NSCP-7</span></div><div class="c c3"><span class="sm"><span style="letter-spacing:0.122px;">EPIC for e2e Playwright</span><br><span style="letter-spacing:-0.402px;">NSCP</span></span></div><div class="c c4"><svg class="av" viewBox="0 0 24 24" width="24" height="24"><circle cx="12" cy="12" r="12" fill="#68748d"/><circle cx="12" cy="7.8" r="4.4" fill="#fff"/><rect x="5.7" y="11.6" width="12.6" height="10" rx="3" fill="#fff"/></svg><span class="nm" style="letter-spacing:0.218px;">Unassigned</span></div><div class="c c5"><span class="av au"><span style="letter-spacing:0.9px;">AU</span></span><span class="nm" style="letter-spacing:0.309px;">Apps Testing User</span></div><div class="c c6"><span class="pi"><i></i><i></i></span><span class="pt" style="letter-spacing:0.421px;">Medium</span></div><div class="c c7"><span class="bd sel" style="background:#9fa6b8;color:#4a5776;width:121px"><span class="bt" style="letter-spacing:0.048px;">SELECTED FOR D...</span></span></div><div class="c c8"><span class="tx" style="letter-spacing:0.264px;">Unresolved</span></div><div class="c c9"><span class="tx" style="letter-spacing:.3px">Oct 23, 20<span style="margin-left:1.5px">24</span></span></div></div>
<div class="r kd"><div class="c c1"><svg class="ti" viewBox="0 0 14 14" width="14" height="14"><rect width="14" height="14" rx="2" fill="#6cb54a"/><path d="M3.9 3.7 a0.9 0.9 0 0 1 .9 -.9 h4.4 a0.9 0.9 0 0 1 .9 .9 V11 L7 8.7 L3.9 11 Z" fill="#fff"/></svg></div><div class="c c2"><span class="key st" style="letter-spacing:0.331px;">NSCP-6</span></div><div class="c c3"><span class="sm"><span style="letter-spacing:0.3px;">xxxx</span></span></div><div class="c c4"><svg class="av" viewBox="0 0 24 24" width="24" height="24"><circle cx="12" cy="12" r="12" fill="#68748d"/><circle cx="12" cy="7.8" r="4.4" fill="#fff"/><rect x="5.7" y="11.6" width="12.6" height="10" rx="3" fill="#fff"/></svg><span class="nm" style="letter-spacing:0.218px;">Unassigned</span></div><div class="c c5"><svg class="av" viewBox="0 0 24 24" width="24" height="24"><use href="#rp"/></svg><span class="nm" style="letter-spacing:-0.13px;">Raul Pelaez</span></div><div class="c c6"><span class="none" style="letter-spacing:0.244px;">None</span></div><div class="c c7"><span class="bd" style="background:#dffcf0;color:#2a6a4c;width:52px"><span class="bt" style="letter-spacing:0.206px;">DONE</span><svg class="bcv" viewBox="0 0 8 6" width="8" height="6"><path d="M1.2 1.6 L4 4.3 L6.8 1.6" fill="none" stroke="currentColor" stroke-width="1.6" stroke-linecap="round" stroke-linejoin="round"/></svg></span></div><div class="c c8"><span class="tx" style="letter-spacing:0.177px;">Done</span></div><div class="c c9"><span class="tx">Mar <span style="letter-spacing:-1.6px">1</span>7, 20<span style="margin-left:1.2px">23</span></span></div></div>
<div class="r kr"><div class="c c1"><svg class="ti" viewBox="0 0 14 14" width="14" height="14"><rect width="14" height="14" rx="2" fill="#6cb54a"/><path d="M3.9 3.7 a0.9 0.9 0 0 1 .9 -.9 h4.4 a0.9 0.9 0 0 1 .9 .9 V11 L7 8.7 L3.9 11 Z" fill="#fff"/></svg></div><div class="c c2"><span class="key" style="letter-spacing:0.271px;">NSCP-5</span></div><div class="c c3"><span class="sm"><span style="letter-spacing:0.3px;">xxxx</span></span></div><div class="c c4"><svg class="av" viewBox="0 0 24 24" width="24" height="24"><circle cx="12" cy="12" r="12" fill="#68748d"/><circle cx="12" cy="7.8" r="4.4" fill="#fff"/><rect x="5.7" y="11.6" width="12.6" height="10" rx="3" fill="#fff"/></svg><span class="nm" style="letter-spacing:0.218px;">Unassigned</span></div><div class="c c5"><svg class="av" viewBox="0 0 24 24" width="24" height="24"><use href="#rp"/></svg><span class="nm" style="letter-spacing:-0.13px;">Raul Pelaez</span></div><div class="c c6"><span class="none" style="letter-spacing:0.244px;">None</span></div><div class="c c7"><span class="bd" style="background:#ee4614;color:#fff;width:88px"><span class="bt" style="letter-spacing:0.07px;">CANCELLED</span><svg class="bcv" viewBox="0 0 8 6" width="8" height="6"><path d="M1.2 1.6 L4 4.3 L6.8 1.6" fill="none" stroke="currentColor" stroke-width="1.6" stroke-linecap="round" stroke-linejoin="round"/></svg></span></div><div class="c c8"><span class="tx" style="letter-spacing:0.264px;">Unresolved</span></div><div class="c c9"><span class="tx">Mar <span style="letter-spacing:-1.6px">1</span>7, 20<span style="margin-left:1.2px">23</span></span></div></div>
<div class="r kd"><div class="c c1"><svg class="ti" viewBox="0 0 14 14" width="14" height="14"><rect width="14" height="14" rx="2" fill="#6cb54a"/><path d="M3.9 3.7 a0.9 0.9 0 0 1 .9 -.9 h4.4 a0.9 0.9 0 0 1 .9 .9 V11 L7 8.7 L3.9 11 Z" fill="#fff"/></svg></div><div class="c c2"><span class="key st" style="letter-spacing:0.371px;">NSCP-4</span></div><div class="c c3"><span class="sm"><span style="letter-spacing:-0.226px;">KKKKKK</span></span></div><div class="c c4"><svg class="av" viewBox="0 0 24 24" width="24" height="24"><circle cx="12" cy="12" r="12" fill="#68748d"/><circle cx="12" cy="7.8" r="4.4" fill="#fff"/><rect x="5.7" y="11.6" width="12.6" height="10" rx="3" fill="#fff"/></svg><span class="nm" style="letter-spacing:0.218px;">Unassigned</span></div><div class="c c5"><svg class="av" viewBox="0 0 24 24" width="24" height="24"><use href="#rp"/></svg><span class="nm" style="letter-spacing:-0.13px;">Raul Pelaez</span></div><div class="c c6"><span class="none" style="letter-spacing:0.244px;">None</span></div><div class="c c7"><span class="bd" style="background:#dffcf0;color:#2a6a4c;width:52px"><span class="bt" style="letter-spacing:0.206px;">DONE</span><svg class="bcv" viewBox="0 0 8 6" width="8" height="6"><path d="M1.2 1.6 L4 4.3 L6.8 1.6" fill="none" stroke="currentColor" stroke-width="1.6" stroke-linecap="round" stroke-linejoin="round"/></svg></span></div><div class="c c8"><span class="tx" style="letter-spacing:0.177px;">Done</span></div><div class="c c9"><span class="tx">Mar <span style="letter-spacing:-1.6px">1</span>7, 20<span style="margin-left:1.2px">23</span></span></div></div>
<div class="r kd"><div class="c c1"><svg class="ti" viewBox="0 0 14 14" width="14" height="14"><rect width="14" height="14" rx="2" fill="#6cb54a"/><path d="M3.9 3.7 a0.9 0.9 0 0 1 .9 -.9 h4.4 a0.9 0.9 0 0 1 .9 .9 V11 L7 8.7 L3.9 11 Z" fill="#fff"/></svg></div><div class="c c2"><span class="key st" style="letter-spacing:0.311px;">NSCP-3</span></div><div class="c c3"><span class="sm"><span style="letter-spacing:0.483px;">JJJJJJJ</span></span></div><div class="c c4"><svg class="av" viewBox="0 0 24 24" width="24" height="24"><circle cx="12" cy="12" r="12" fill="#68748d"/><circle cx="12" cy="7.8" r="4.4" fill="#fff"/><rect x="5.7" y="11.6" width="12.6" height="10" rx="3" fill="#fff"/></svg><span class="nm" style="letter-spacing:0.218px;">Unassigned</span></div><div class="c c5"><svg class="av" viewBox="0 0 24 24" width="24" height="24"><use href="#rp"/></svg><span class="nm" style="letter-spacing:-0.13px;">Raul Pelaez</span></div><div class="c c6"><span class="none" style="letter-spacing:0.244px;">None</span></div><div class="c c7"><span class="bd" style="background:#dffcf0;color:#2a6a4c;width:52px"><span class="bt" style="letter-spacing:0.206px;">DONE</span><svg class="bcv" viewBox="0 0 8 6" width="8" height="6"><path d="M1.2 1.6 L4 4.3 L6.8 1.6" fill="none" stroke="currentColor" stroke-width="1.6" stroke-linecap="round" stroke-linejoin="round"/></svg></span></div><div class="c c8"><span class="tx" style="letter-spacing:0.177px;">Done</span></div><div class="c c9"><span class="tx">Mar <span style="letter-spacing:-1.6px">1</span>7, 20<span style="margin-left:1.2px">23</span></span></div></div>
<div class="r ky"><div class="c c1"><svg class="ti" viewBox="0 0 14 14" width="14" height="14"><rect width="14" height="14" rx="2" fill="#6cb54a"/><path d="M3.9 3.7 a0.9 0.9 0 0 1 .9 -.9 h4.4 a0.9 0.9 0 0 1 .9 .9 V11 L7 8.7 L3.9 11 Z" fill="#fff"/></svg></div><div class="c c2"><span class="key" style="letter-spacing:0.251px;">NSCP-2</span></div><div class="c c3"><span class="sm"><span style="letter-spacing:-0.346px;">YYYYYY</span></span></div><div class="c c4"><svg class="av" viewBox="0 0 24 24" width="24" height="24"><circle cx="12" cy="12" r="12" fill="#68748d"/><circle cx="12" cy="7.8" r="4.4" fill="#fff"/><rect x="5.7" y="11.6" width="12.6" height="10" rx="3" fill="#fff"/></svg><span class="nm" style="letter-spacing:0.218px;">Unassigned</span></div><div class="c c5"><svg class="av" viewBox="0 0 24 24" width="24" height="24"><use href="#rp"/></svg><span class="nm" style="letter-spacing:-0.13px;">Raul Pelaez</span></div><div class="c c6"><span class="none" style="letter-spacing:0.244px;">None</span></div><div class="c c7"><span class="bd" style="background:#f5ae2d;color:#111;width:97px"><span class="bt" style="letter-spacing:0.049px;">IN PROGRESS</span><svg class="bcv" viewBox="0 0 8 6" width="8" height="6"><path d="M1.2 1.6 L4 4.3 L6.8 1.6" fill="none" stroke="currentColor" stroke-width="1.6" stroke-linecap="round" stroke-linejoin="round"/></svg></span></div><div class="c c8"><span class="tx" style="letter-spacing:0.264px;">Unresolved</span></div><div class="c c9"><span class="tx">Mar <span style="letter-spacing:-1.6px">1</span>7, 20<span style="margin-left:1.2px">23</span></span></div></div>
<div class="r kg"><div class="c c1"><svg class="ti" viewBox="0 0 14 14" width="14" height="14"><rect width="14" height="14" rx="2" fill="#6cb54a"/><path d="M3.9 3.7 a0.9 0.9 0 0 1 .9 -.9 h4.4 a0.9 0.9 0 0 1 .9 .9 V11 L7 8.7 L3.9 11 Z" fill="#fff"/></svg></div><div class="c c2"><span class="key" style="letter-spacing:-0.069px;">NSCP-1</span></div><div class="c c3"><span class="sm"><span style="letter-spacing:0.054px;">XXXXXX</span></span></div><div class="c c4"><svg class="av" viewBox="0 0 24 24" width="24" height="24"><circle cx="12" cy="12" r="12" fill="#68748d"/><circle cx="12" cy="7.8" r="4.4" fill="#fff"/><rect x="5.7" y="11.6" width="12.6" height="10" rx="3" fill="#fff"/></svg><span class="nm" style="letter-spacing:0.218px;">Unassigned</span></div><div class="c c5"><svg class="av" viewBox="0 0 24 24" width="24" height="24"><use href="#rp"/></svg><span class="nm" style="letter-spacing:-0.13px;">Raul Pelaez</span></div><div class="c c6"><span class="none" style="letter-spacing:0.244px;">None</span></div><div class="c c7"><span class="bd" style="background:#3f8b3e;color:#fff;width:75px"><span class="bt" style="letter-spacing:-0.035px;">BACKLOG</span><svg class="bcv" viewBox="0 0 8 6" width="8" height="6"><path d="M1.2 1.6 L4 4.3 L6.8 1.6" fill="none" stroke="currentColor" stroke-width="1.6" stroke-linecap="round" stroke-linejoin="round"/></svg></span></div><div class="c c8"><span class="tx" style="letter-spacing:0.264px;">Unresolved</span></div><div class="c c9"><span class="tx">Mar <span style="letter-spacing:-1.6px">1</span>7, 20<span style="margin-left:1.2px">23</span></span></div></div>
</div>
<div class="sb"><div class="thumb"></div></div>
<div class="ft">
<span class="cnt" style="letter-spacing:0.456px;">1-22 of 22</span>
<svg class="rf" viewBox="0 0 14 14" width="12" height="12"><g fill="none" stroke="#2c3e5d" stroke-width="1.7" stroke-linecap="round" stroke-linejoin="round"><path d="M4.2 11.4 A4 4.8 0 0 1 4.2 2.6 M2.2 2.2 L4.4 2.5 L4.1 4.8"/><path d="M9.8 2.6 A4 4.8 0 0 1 9.8 11.4 M11.8 11.8 L9.6 11.5 L9.9 9.2"/></g></svg>
<svg class="pl" viewBox="0 0 8 12" width="8" height="12"><path d="M6.3 1.6 L1.9 6 L6.3 10.4" fill="none" stroke="#a9b0bd" stroke-width="1.8" stroke-linecap="round" stroke-linejoin="round"/></svg>
<span class="pg">1</span>
<svg class="pr" viewBox="0 0 8 12" width="8" height="12"><path d="M1.7 1.6 L6.1 6 L1.7 10.4" fill="none" stroke="#a9b0bd" stroke-width="1.8" stroke-linecap="round" stroke-linejoin="round"/></svg>
</div>
</div>
</div>
</body></html>
